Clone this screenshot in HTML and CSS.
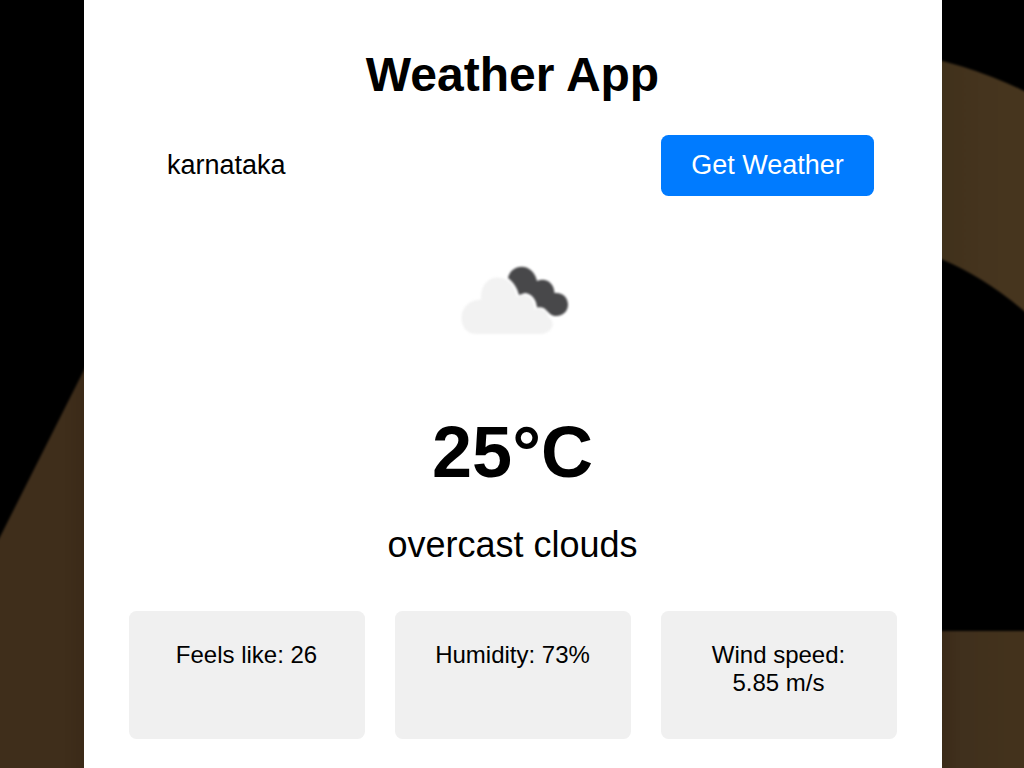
FILE: index.html
```html
<!DOCTYPE html>
<html lang="en">
<head>
<meta charset="utf-8">
<title>Weather App</title>
<link rel="stylesheet" href="styles.css">
</head>
<body class="page">
<svg class="backdrop" viewBox="0 0 1024 768" aria-hidden="true">
  <defs>
    <linearGradient id="left" gradientUnits="userSpaceOnUse" x1="0" y1="0" x2="84" y2="0"><stop offset="0" stop-color="#3f2e1b"/><stop offset="0.75" stop-color="#3f2e1b"/><stop offset="1" stop-color="#3b2a18"/></linearGradient>
    <linearGradient id="arc" gradientUnits="userSpaceOnUse" x1="941" y1="0" x2="1024" y2="0"><stop offset="0" stop-color="#40311b"/><stop offset="0.5" stop-color="#45341e"/><stop offset="1" stop-color="#47361e"/></linearGradient>
    <linearGradient id="foot" gradientUnits="userSpaceOnUse" x1="941" y1="0" x2="1024" y2="0"><stop offset="0" stop-color="#3b2a18"/><stop offset="0.25" stop-color="#40301d"/><stop offset="1" stop-color="#44331c"/></linearGradient>
    <filter id="soft" x="-5%" y="-5%" width="110%" height="110%" color-interpolation-filters="sRGB"><feGaussianBlur stdDeviation="1"/></filter>
  </defs>
  <g filter="url(#soft)">
    <path fill="url(#left)" d="M-10 555L0 537L84 370L100 338V790H-10Z"/>
    <path fill="url(#arc)" d="M920 56Q941 60 962 66.500Q993 76 1024 91L1045 102V330Q1033 319 1024 311Q984 277 941 259L920 250Z"/>
    <path fill="url(#foot)" d="M920 631H1045V790H920Z"/>
  </g>
</svg>
<main class="card">
  <h1 class="title">Weather App</h1>
  <form class="search">
    <input class="city" type="text" value="karnataka" aria-label="City">
    <button class="submit" type="button">Get Weather</button>
  </form>
  <svg class="icon" viewBox="0 0 150 150" role="img" aria-label="Overcast clouds">
    <defs><filter id="edge" color-interpolation-filters="sRGB"><feGaussianBlur stdDeviation="0.8"/></filter></defs>
    <g filter="url(#edge)">
      <path fill="#48484a" d="M70 52C73 37 95 36 99 55C108 51 116 57 116.500 67C125 66 130 72 130 78.500C130 86 124 90 118.500 90C114 90 112 88 109 85C106 81 103 81 99 81.500C98 73 94 68 87 67L81 69C79 61 75 56 70 52Z"/>
      <path fill="#f2f2f2" d="M38 108C29 108 23.500 101 23.500 92C23.500 82 31 73.500 43 73.500C42 60 50 51.500 59.500 51.500C69 51.500 76 58 79 71C87 66 96 71 96.500 83C104 81 109 85 111 92C115 94 116 99 113 103C110 106.500 107 108 102 108Z"/>
    </g>
  </svg>
  <p class="temperature">25°C</p>
  <p class="description">overcast clouds</p>
  <section class="details">
    <div class="detail">Feels like: 26</div>
    <div class="detail">Humidity: 73%</div>
    <div class="detail">Wind speed: 5.85 m/s</div>
  </section>
</main>
</body>
</html>
```
FILE: styles.css
```css
.page {
  margin: 0;
  height: 768px;
  overflow: hidden;
  background: #000;
  color: #000;
  font-family: "Liberation Sans", Arial, sans-serif;
}
.backdrop {
  position: absolute;
  inset: 0;
  width: 1024px;
  height: 768px;
}
.card {
  position: relative;
  box-sizing: border-box;
  display: flex;
  flex-direction: column;
  align-items: center;
  width: 858px;
  height: 800px;
  margin-left: 83.5px;
  padding: 47px 45px 0;
  background: #fff;
}
.title {
  margin: 0 0 33px;
  font-size: 48px;
  line-height: 55px;
}
.search {
  display: flex;
  justify-content: space-between;
  align-self: stretch;
  height: 61px;
  margin: 0 23px 30px;
}
.city {
  box-sizing: border-box;
  width: 400px;
  padding: 0 15.5px;
  border: 0;
  outline: 0;
  background: transparent;
  color: #000;
  font: 27px "Liberation Sans", Arial, sans-serif;
}
.submit {
  box-sizing: border-box;
  width: 213px;
  padding: 0 0 0 1px;
  border: 0;
  border-radius: 7.5px;
  background: #007bff;
  color: #fff;
  font: 27px "Liberation Sans", Arial, sans-serif;
}
.icon {
  width: 150px;
  height: 150px;
  flex: none;
  margin-bottom: 35px;
}
.temperature {
  margin: 0 0 31px;
  font-size: 72px;
  font-weight: bold;
  line-height: 82px;
}
.description {
  margin: 0 0 45px;
  font-size: 36px;
  line-height: 42px;
}
.details {
  display: grid;
  grid-template-columns: repeat(3, 1fr);
  gap: 30px;
  align-self: stretch;
}
.detail {
  box-sizing: border-box;
  height: 128px;
  padding: 30px;
  border-radius: 7.5px;
  background: #f0f0f0;
  font-size: 24px;
  line-height: 28px;
  text-align: center;
}
```
